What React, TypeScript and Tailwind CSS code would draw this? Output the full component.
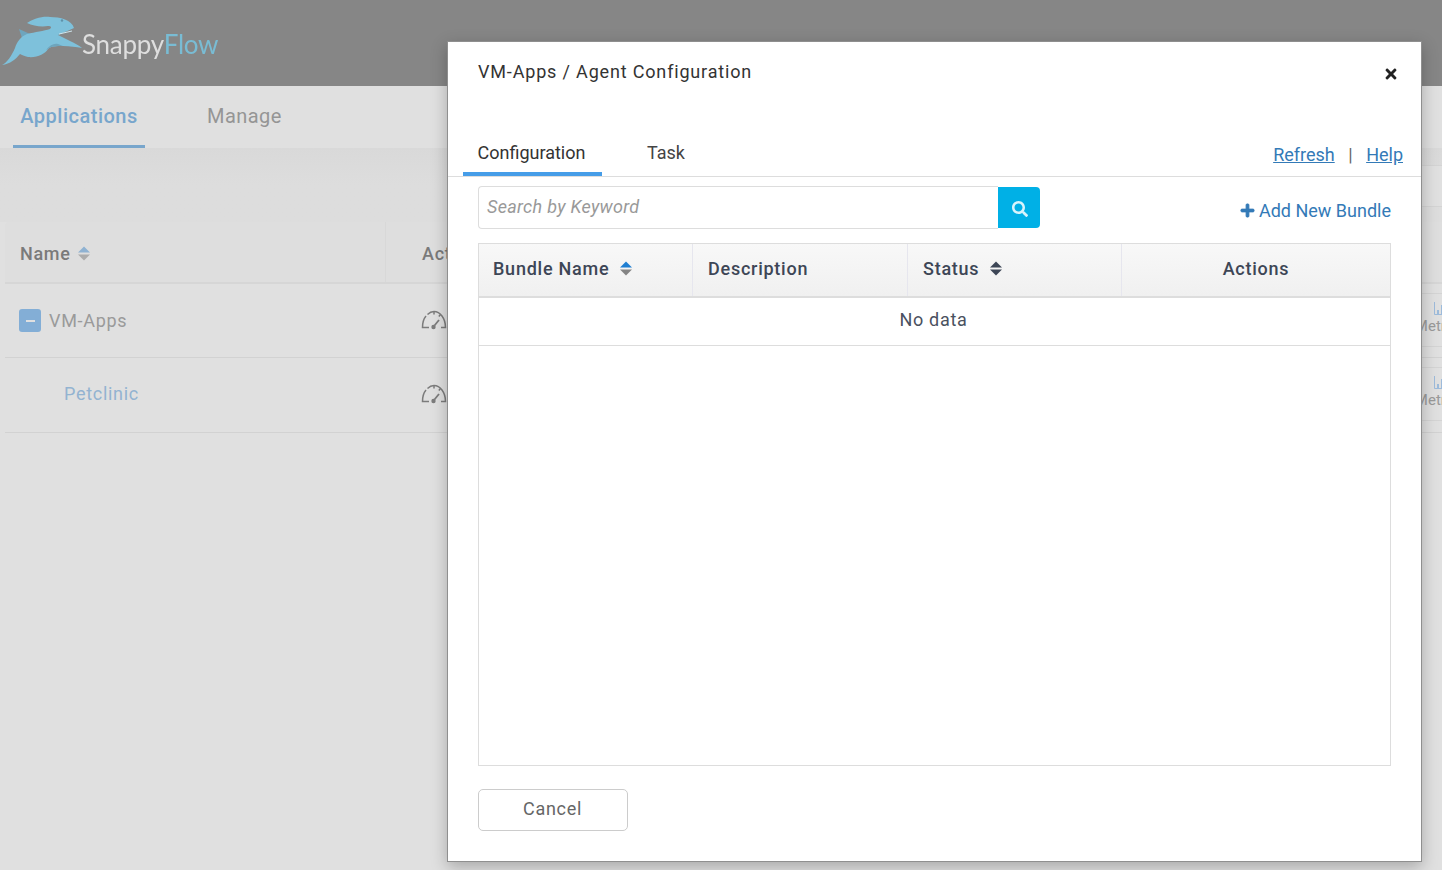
import React from 'react';
import { FaPlus, FaSearch, FaTimes } from 'react-icons/fa';

const SortIcon = ({ up, down }: { up: string; down: string }) => (
  <svg width="12" height="15" viewBox="0 0 12 15" className="inline-block shrink-0">
    <path d="M6 0.5 L12 6.5 H0 Z" fill={up} />
    <path d="M0 8.5 H12 L6 14.5 Z" fill={down} />
  </svg>
);

const Gauge = () => (
  <svg width="26" height="20" viewBox="0 0 26 20" fill="none" stroke="#7c7c7c" strokeWidth="1.5">
    <path d="M8 17.5 H1.5 C1.5 13 2.5 9 5 6" />
    <path d="M6.5 4.5 C8.5 2.5 11 1.5 13 1.5 C19 1.5 24.5 8 24.5 17.5 H20" />
    <path d="M13 1.5 V4.5 M19.5 4.5 L17.8 6.5" />
    <path d="M13.5 15.5 L18 10" strokeWidth="1.8" />
    <circle cx="12.5" cy="17" r="2.2" fill="#7c7c7c" stroke="none" />
  </svg>
);

const BarsIcon = () => (
  <svg width="12" height="13" viewBox="0 0 12 13" fill="none" className="shrink-0">
    <path d="M0.5 0 V12.5 H12" stroke="#9dbbdb" />
    <rect x="3" y="8" width="2" height="4" fill="#9dbbdb" />
    <rect x="7" y="3" width="2" height="9" fill="#9dbbdb" />
    <rect x="11" y="6" width="1" height="6" fill="#9dbbdb" />
  </svg>
);

const Logo = () => (
  <div className="flex items-start blur-[0.4px]">
    <svg width="84" height="56" viewBox="0 13 84 56" className="shrink-0">
      <path d="M19 29 L22 38 L30 34 Z" fill="#6ea5bd" />
      <path
        d="M2 65 C7 63 12 55 15 48 C17 42 20 37 27 34 C35 32 44 31 50 29 C52 27 51 26 48 26 C41 27 33 26 27 23 C33 19 42 16 50 17 C60 17 72 20 74 28 C70 30 64 32 58 35 C62 37 66 39 70 41 C74 43 79 45 82 48 C76 47 70 46 63 46 C56 46 51 46 48 49 C45 54 37 58 28 57 C24 56 22 55 20 54 C16 59 10 64 2 65 Z"
        fill="#7ec1db"
      />
      <path d="M48 49 C51 46 56 46 63 46 L58 44 C54 43 50 45 46 50 Z" fill="#6ea5bd" />
      <path d="M59 34 L72 31" stroke="#cfe6ee" strokeWidth="1" />
      <circle cx="62" cy="20.5" r="1.2" fill="#5f93aa" />
    </svg>
    <div className="mt-[15px] -ml-[2px] font-['Lato',sans-serif] text-[26px] leading-[32px] tracking-[-0.25px]">
      <span className="text-[#dedede]">Snappy</span>
      <span className="text-[#79bcd4]">Flow</span>
    </div>
  </div>
);

const BackgroundRow = ({ label, indent, height }: { label: React.ReactNode; indent: string; height: string }) => (
  <div className={`flex border-b border-[#d2d2d2] ${height}`}>
    <div className={`flex w-[381px] items-center ${indent}`}>{label}</div>
    <div className="flex w-[70px] items-center pb-[2px] pl-[35px]">
      <Gauge />
    </div>
    <div className="flex-1" />
    <div className="mt-[9px] flex h-[54px] w-[60px] flex-col items-center justify-center border-y border-[#d4d4d4] text-[15px] text-[#9a9a9a]">
      <BarsIcon />
      <span>Metrics</span>
    </div>
  </div>
);

export default function App() {
  return (
    <div className="relative h-[870px] w-[1442px] overflow-hidden bg-[#e0e0e0] font-['Roboto',sans-serif]">
      <header className="flex h-[86px] items-start bg-[#868686] pt-[13px]">
        <Logo />
      </header>

      <nav className="flex h-[62px] gap-[46px] bg-[#e0e0e0] pl-[13px] text-[20px] tracking-[0.5px]">
        <div className="flex h-[62px] w-[132px] items-center justify-center border-b-[3px] border-[#78a6cc] font-medium text-[#78a6cc]">
          Applications
        </div>
        <div className="flex items-center px-[16px] pb-[2px] tracking-[0.45px] text-[#959595]">Manage</div>
      </nav>

      <div className="h-[74px] bg-gradient-to-b from-[#d9d9d9] via-[#dddddd] to-[#dddddd] pt-[17px]">
        <div className="ml-auto h-[42px] w-[60px] border-y border-[#d4d4d4] bg-[#e0e0e0]" />
      </div>

      <main className="pl-[5px]">
        <div className="w-[1465px] bg-[#e0e0e0]">
          <div className="flex h-[62px] rounded-t-[4px] border-b-2 border-[#d6d6d6] bg-[#dedede] text-[18px] font-medium tracking-[0.7px] text-[#7a7a7a]">
            <div className="flex w-[381px] items-center gap-[7px] border-r border-[#d8d8d8] pl-[15px] pt-[2px]">
              Name
              <SortIcon up="#8fb2d2" down="#acacac" />
            </div>
            <div className="flex items-center pl-[36px] pt-[2px]">Actions</div>
          </div>
          <BackgroundRow
            height="h-[74px]"
            indent="gap-[8px] pl-[14px]"
            label={
              <>
                <span className="flex h-[23px] w-[22px] items-center justify-center rounded-[3px] bg-[#83aed6]">
                  <span className="h-[2px] w-[9px] bg-[#e0e0e0]" />
                </span>
                <span className="text-[18px] tracking-[0.7px] text-[#9a9a9a]">VM-Apps</span>
              </>
            }
          />
          <BackgroundRow
            height="h-[75px]"
            indent="pb-[4px] pl-[59px]"
            label={<span className="text-[18px] tracking-[0.7px] text-[#93b3d1]">Petclinic</span>}
          />
        </div>
      </main>

      <div className="absolute left-[447px] top-[41px] flex h-[821px] w-[975px] flex-col border border-[#8f8f8f] bg-white shadow-[0_5px_15px_rgba(0,0,0,0.25)]">
        <div className="flex h-[86px] items-start justify-between pl-[30px] pr-[22px] pt-[17px]">
          <h2 className="text-[18px] leading-[26px] tracking-[0.83px] text-[#333333]">VM-Apps / Agent Configuration</h2>
          <FaTimes className="mt-[7px] text-[16px] text-[#222222]" />
        </div>

        <div className="flex h-[49px] items-end justify-between border-b border-[#dddddd] pl-[15px] pr-[18px]">
          <div className="flex text-[18px]">
            <div className="flex h-[49px] w-[139px] items-start justify-center border-b-[4px] border-[#469de8] pr-[2px] pt-[14px] leading-[24px] text-[#333333]">
              Configuration
            </div>
            <div className="ml-[45px] pt-[14px] leading-[24px] text-[#444444]">Task</div>
          </div>
          <div className="flex h-[49px] items-start gap-[13.5px] pt-[16px] text-[18px] leading-[24px] text-[#337ab7]">
            <a className="underline">Refresh</a>
            <span className="text-[#666666]">|</span>
            <a className="underline">Help</a>
          </div>
        </div>

        <div className="flex items-center justify-between pl-[30px] pr-[30px] pt-[9px]">
          <div className="flex h-[43px] w-[562px]">
            <div className="flex flex-1 items-center rounded-l-[4px] border border-r-0 border-[#dddddd] pb-[2px] pl-[8px] text-[18px] italic tracking-[0.3px] text-[#999999]">
              Search by Keyword
            </div>
            <div className="my-px flex w-[42px] items-center justify-center rounded-r-[4px] bg-[#00b0e6]">
              <FaSearch className="ml-[2px] mt-[2px] text-[16px] text-[#d8f4fc]" />
            </div>
          </div>
          <div className="flex items-center gap-[4px] pt-[6px] text-[18px] text-[#337ab7]">
            <FaPlus className="text-[15px]" stroke="currentColor" strokeWidth={30} />
            Add New Bundle
          </div>
        </div>

        <div className="ml-[30px] mt-[14px] h-[523px] w-[913px] border border-[#dddddd]">
          <div className="grid h-[54px] grid-cols-[214px_215px_214px_1fr] border-b-[2px] border-[#dddddd] bg-gradient-to-b from-[#f8f8f8] to-[#f0f0f0] text-[18px] font-medium tracking-[0.75px] text-[#3d4656]">
            <div className="flex items-center gap-[11px] border-r border-[#e6e6ee] pb-[4px] pl-[14px]">
              Bundle Name
              <SortIcon up="#1f7fd2" down="#848484" />
            </div>
            <div className="flex items-center border-r border-[#e6e6ee] pb-[4px] pl-[15px]">Description</div>
            <div className="flex items-center gap-[11px] border-r border-[#e6e6ee] pb-[4px] pl-[15px]">
              Status
              <SortIcon up="#3d4656" down="#3d4656" />
            </div>
            <div className="flex items-center justify-center pb-[4px]">Actions</div>
          </div>
          <div className="flex h-[48px] items-center justify-center border-b border-[#dddddd] pb-[4px] pr-[2px] text-[18px] tracking-[0.7px] text-[#4a5160]">
            No data
          </div>
        </div>

        <div className="pl-[30px] pt-[23px]">
          <button className="h-[42px] w-[150px] rounded-[5px] border border-[#cccccc] bg-white pb-[4px] pr-[1px] text-[18px] tracking-[0.7px] text-[#666666]">
            Cancel
          </button>
        </div>
      </div>
    </div>
  );
}
